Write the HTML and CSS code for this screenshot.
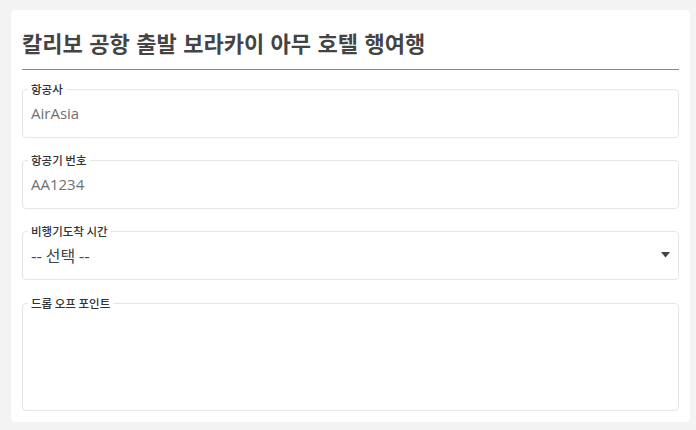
FILE: index.html
```html
<!DOCTYPE html>
<html>
<head>
    <title>보라카이 호텔 행 여행</title>
    <link rel="stylesheet" href="styles.css">
</head>
<body>
    <div class="container">
        <h2 class="title">칼리보 공항 출발 보라카이 아무 호텔 행여행</h2>
        <form id="transferForm" class="transfer-form">
            <fieldset class="field">
                <legend>항공사</legend>
                <input type="text" id="airline" name="airline" value="AirAsia">
            </fieldset>
            <fieldset class="field">
                <legend>항공기 번호</legend>
                <input type="text" id="flightNo" name="flightNo" value="AA1234">
            </fieldset>
            <fieldset class="field">
                <legend>비행기도착 시간</legend>
                <div class="select-wrap">
                    <select id="arrival" name="arrival">
                        <option value="">-- 선택 --</option>
                        <option value="morning">오전</option>
                        <option value="afternoon">오후</option>
                    </select>
                    <svg class="caret" width="9" height="6" viewBox="0 0 9 6"><path d="M0 0h9L4.5 5.5z" fill="#444"/></svg>
                </div>
            </fieldset>
            <fieldset class="field field-tall">
                <legend>드롭 오프 포인트</legend>
                <textarea id="dropOff" name="dropOff"></textarea>
            </fieldset>
        </form>
    </div>
</body>
</html>
```

FILE: styles.css
```css
body {
    font-family: "Open Sans", "Noto Sans CJK KR", sans-serif;
    margin: 0;
    padding: 10px 6px 8px 11px;
    background-color: #f3f3f3;
}

.container {
    background-color: #fff;
    border-radius: 4px;
    padding: 0 11px 11px;
}

.title {
    margin: 0;
    padding: 18px 0 13px;
    font-family: "Noto Sans CJK KR", sans-serif;
    font-size: 22px;
    font-weight: 700;
    line-height: 28px;
    word-spacing: 1.5px;
    color: #444;
    border-bottom: 1px solid #5aaa52;
}

.transfer-form {
    display: flex;
    flex-direction: column;
    gap: 16px;
    padding-top: 13px;
}

.field {
    margin: 0;
    padding: 0 5px 6px;
    border: 1px solid #e6e6e6;
    border-radius: 4px;
    min-width: 0;
}

.field-tall {
    margin-top: 1px;
}

.field legend {
    padding: 0 3px;
    font-family: "Noto Sans CJK KR", sans-serif;
    font-size: 11.5px;
    font-weight: 500;
    line-height: 12px;
    color: #333;
}

.field input,
.field select,
.field textarea {
    display: block;
    width: 100%;
    box-sizing: border-box;
    border: none;
    outline: none;
    background: transparent;
    margin: 0;
}

.field input {
    height: 36px;
    padding: 0 3px;
    font-family: "Open Sans", "Noto Sans CJK KR", sans-serif;
    font-size: 15px;
    color: #6f6f6f;
}

.select-wrap {
    display: flex;
    align-items: center;
}

.select-wrap select {
    flex: 1;
    height: 36px;
    padding: 0 3px;
    appearance: none;
    -webkit-appearance: none;
    font-family: "Noto Sans CJK KR", sans-serif;
    font-size: 16px;
    color: #444;
}

.caret {
    margin-right: 3px;
}

.field textarea {
    height: 95px;
    padding: 4px 3px;
    resize: none;
    font-size: 15px;
}
```
